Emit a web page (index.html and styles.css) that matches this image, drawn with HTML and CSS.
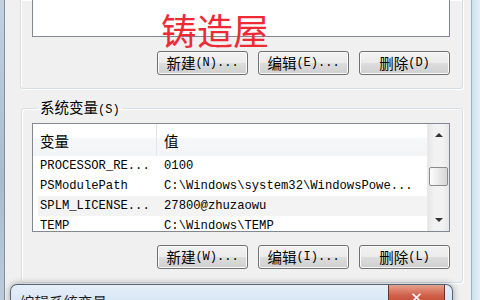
FILE: index.html
```html
<!DOCTYPE html>
<html lang="zh-CN">
<head>
    <meta charset="UTF-8">
    <title>环境变量</title>
    <link rel="stylesheet" href="styles.css">
</head>
<body>
    <div class="window">
        <div class="frame-left"></div>
        <div class="client">
            <div class="group group-user">
                <div class="listbox listbox-cut"></div>
                <div class="buttons">
                    <div class="btn">新建<span class="a">(N)...</span></div>
                    <div class="btn">编辑<span class="a">(E)...</span></div>
                    <div class="btn">删除<span class="a">(D)</span></div>
                </div>
            </div>

            <fieldset class="group group-sys">
                <legend>系统变量<span class="a">(S)</span></legend>
                <div class="listbox listbox-sys">
                    <div class="list-body">
                        <div class="list-head">
                            <div class="c1">变量</div>
                            <div class="c2">值</div>
                        </div>
                        <div class="row"><div class="c1">PROCESSOR_RE...</div><div class="c2">0100</div></div>
                        <div class="row"><div class="c1">PSModulePath</div><div class="c2">C:\Windows\system32\WindowsPowe...</div></div>
                        <div class="row row-alt"><div class="c1">SPLM_LICENSE...</div><div class="c2">27800@zhuzaowu</div></div>
                        <div class="row"><div class="c1">TEMP</div><div class="c2">C:\Windows\TEMP</div></div>
                    </div>
                    <div class="scrollbar">
                        <div class="arrow arrow-up"></div>
                        <div class="track"><div class="thumb"></div></div>
                        <div class="arrow arrow-down"></div>
                    </div>
                </div>
                <div class="buttons">
                    <div class="btn">新建<span class="a">(W)...</span></div>
                    <div class="btn">编辑<span class="a">(I)...</span></div>
                    <div class="btn">删除<span class="a">(L)</span></div>
                </div>
            </fieldset>

            <div class="child">
                <div class="child-title">编辑系统变量</div>
                <div class="close">✕</div>
            </div>
        </div>
        <div class="frame-right"></div>
    </div>

    <div class="watermark">铸造屋</div>
</body>
</html>
```

FILE: styles.css
```css
body {
    margin: 0;
    width: 480px;
    height: 300px;
    overflow: hidden;
    position: relative;
    background-color: #f0f0f0;
    font-family: "Noto Sans CJK SC", sans-serif;
    font-size: 14px;
    color: #000;
}
.window {
    display: flex;
    height: 300px;
}
.frame-left {
    width: 4px;
    background: linear-gradient(#c3d1df, #a8bcd0 60%, #bccbdb);
    border-right: 1px solid #848f9b;
}
.client {
    width: 466px;
    background-color: #f0f0f0;
}
.frame-right {
    flex: 1;
    background: linear-gradient(90deg, #c8e4ef, #e4eef7);
    border-left: 1px solid #a3b0bd;
}
.a {
    font-family: "Liberation Mono", monospace;
    font-size: 12px;
}
.group {
    box-sizing: border-box;
    border: 1px solid #d5dfe5;
    box-shadow: inset 1px 1px 0 #fff, 1px 1px 0 #fff;
}
.group-user {
    margin-left: 15px;
    width: 443px;
    border-top: none;
    border-radius: 0 0 3px 3px;
    padding: 0 12px 13px 11px;
}
.listbox {
    box-sizing: border-box;
    width: 418px;
    border: 1px solid #828790;
    background-color: #fff;
}
.listbox-cut {
    height: 37px;
    border-top: none;
}
.buttons {
    display: flex;
    justify-content: flex-end;
    gap: 10px;
    margin-top: 14px;
}
.btn {
    box-sizing: border-box;
    width: 91px;
    height: 24px;
    display: flex;
    align-items: center;
    justify-content: center;
    border: 1px solid #707070;
    border-radius: 3px;
    background: linear-gradient(#f2f2f2, #ebebeb 50%, #dddddd 50%, #cfcfcf);
    box-shadow: inset 0 0 0 1px #fbfbfb;
    font-size: 14.5px;
    line-height: 1;
}
.group-sys {
    min-width: 0;
    margin: 9px 0 0 16px;
    width: 442px;
    border-radius: 3px;
    padding: 4px 12px 13px 10px;
}
.group-sys .buttons {
    margin-top: 13px;
}
.group-sys legend {
    margin-left: 6px;
    padding: 0 2px;
    font-size: 14.5px;
    line-height: 17px;
}
.listbox-sys {
    display: flex;
    height: 109px;
    overflow: hidden;
}
.list-body {
    flex: 1;
    font-family: "Liberation Mono", monospace;
    font-size: 12.2px;
}
.list-head {
    display: flex;
    height: 32px;
    align-items: center;
    background: linear-gradient(#fff 45%, #f6f7f9 45%, #f3f4f6);
    font-family: "Noto Sans CJK SC", sans-serif;
    font-size: 14.5px;
}
.list-head .c1 {
    align-self: stretch;
    display: flex;
    align-items: center;
    border-right: 1px solid #e3e5e8;
}
.c1 {
    box-sizing: border-box;
    width: 124px;
    padding-left: 7px;
    white-space: nowrap;
}
.c2 {
    padding-left: 7px;
    white-space: nowrap;
}
.row {
    display: flex;
    height: 20px;
    align-items: center;
}
.row-alt {
    background: linear-gradient(90deg, #fff 5px, #f3f3f3 5px);
}
.scrollbar {
    width: 21px;
    display: flex;
    flex-direction: column;
    background: linear-gradient(90deg, #e6e6e6, #f2f2f2 30%, #f2f2f2 70%, #e6e6e6);
    border-left: 1px solid #eaeaea;
}
.arrow {
    height: 22px;
    display: flex;
    align-items: center;
    justify-content: center;
}
.arrow::before {
    content: "";
    border-left: 4px solid transparent;
    border-right: 4px solid transparent;
}
.arrow-up::before {
    border-bottom: 4px solid #333;
}
.arrow-down::before {
    border-top: 4px solid #333;
}
.track {
    flex: 1;
    padding-top: 21px;
}
.thumb {
    box-sizing: border-box;
    width: 19px;
    height: 19px;
    margin-left: 1px;
    border: 1px solid #8b8b8b;
    border-radius: 2px;
    background: linear-gradient(90deg, #fdfdfd, #e9e9e9 50%, #d6d6d6);
}
.child {
    display: flex;
    justify-content: space-between;
    box-sizing: border-box;
    width: 443px;
    height: 30px;
    margin: 1px 0 0 5px;
    border: 1px solid #56667a;
    border-bottom: none;
    border-radius: 7px 7px 0 0;
    background: linear-gradient(#e6eff9, #cddff1);
    box-shadow: 0 0 7px rgba(0, 0, 0, 0.35);
}
.child-title {
    padding: 6px 0 0 9px;
    font-size: 14.5px;
    color: #1e1e1e;
}
.close {
    box-sizing: border-box;
    width: 57px;
    height: 22px;
    margin-right: 7px;
    border: 1px solid #6b3327;
    border-top: none;
    border-radius: 0 0 4px 4px;
    background: linear-gradient(#e6a08e, #d0604a 50%, #c0432c);
    color: #fff;
    text-align: center;
    font-family: "DejaVu Sans", sans-serif;
    font-size: 15px;
    font-weight: bold;
    line-height: 27px;
}
.watermark {
    position: absolute;
    left: 161px;
    top: 11px;
    font-size: 36px;
    line-height: 1;
    color: #ef2a34;
}
```
